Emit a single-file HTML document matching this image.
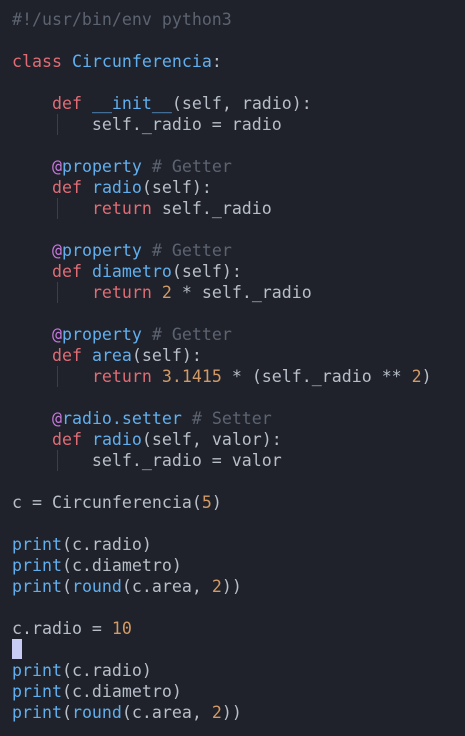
<!DOCTYPE html>
<html><head><meta charset="utf-8"><style>
html,body{margin:0;padding:0;background:#1f222a;width:465px;height:736px;overflow:hidden}
pre{margin:0;position:absolute;left:12px;top:9px;font-family:"DejaVu Sans Mono","Liberation Mono",monospace;font-size:16.6px;line-height:21px;color:#b8bfc9}
.k{color:#e06c75}.f{color:#61afef}.c{color:#5c6370}.n{color:#d19a66}.p{color:#c678dd}
.g{position:absolute;left:57px;width:1px;height:21px;background:#3b3f4a}
.cur{display:inline-block;width:10px;height:20px;background:#c8ccf5;vertical-align:top}
</style></head><body>
<div class="g" style="top:114px"></div>
<div class="g" style="top:198px"></div>
<div class="g" style="top:282px"></div>
<div class="g" style="top:366px"></div>
<div class="g" style="top:450px"></div>
<pre><span class="c">#!/usr/bin/env python3</span>

<span class="k">class</span> <span class="f">Circunferencia</span>:

    <span class="k">def</span> <span class="f">__init__</span>(self, radio):
        self._radio = radio

    <span class="p">@</span><span class="f">property</span> <span class="c"># Getter</span>
    <span class="k">def</span> <span class="f">radio</span>(self):
        <span class="k">return</span> self._radio

    <span class="p">@</span><span class="f">property</span> <span class="c"># Getter</span>
    <span class="k">def</span> <span class="f">diametro</span>(self):
        <span class="k">return</span> <span class="n">2</span> * self._radio

    <span class="p">@</span><span class="f">property</span> <span class="c"># Getter</span>
    <span class="k">def</span> <span class="f">area</span>(self):
        <span class="k">return</span> <span class="n">3.1415</span> * (self._radio ** <span class="n">2</span>)

    <span class="p">@</span><span class="f">radio.setter</span> <span class="c"># Setter</span>
    <span class="k">def</span> <span class="f">radio</span>(self, valor):
        self._radio = valor

c = Circunferencia(<span class="n">5</span>)

<span class="f">print</span>(c.radio)
<span class="f">print</span>(c.diametro)
<span class="f">print</span>(<span class="f">round</span>(c.area, <span class="n">2</span>))

c.radio = <span class="n">10</span>
<span class="cur"></span>
<span class="f">print</span>(c.radio)
<span class="f">print</span>(c.diametro)
<span class="f">print</span>(<span class="f">round</span>(c.area, <span class="n">2</span>))</pre>
</body></html>
